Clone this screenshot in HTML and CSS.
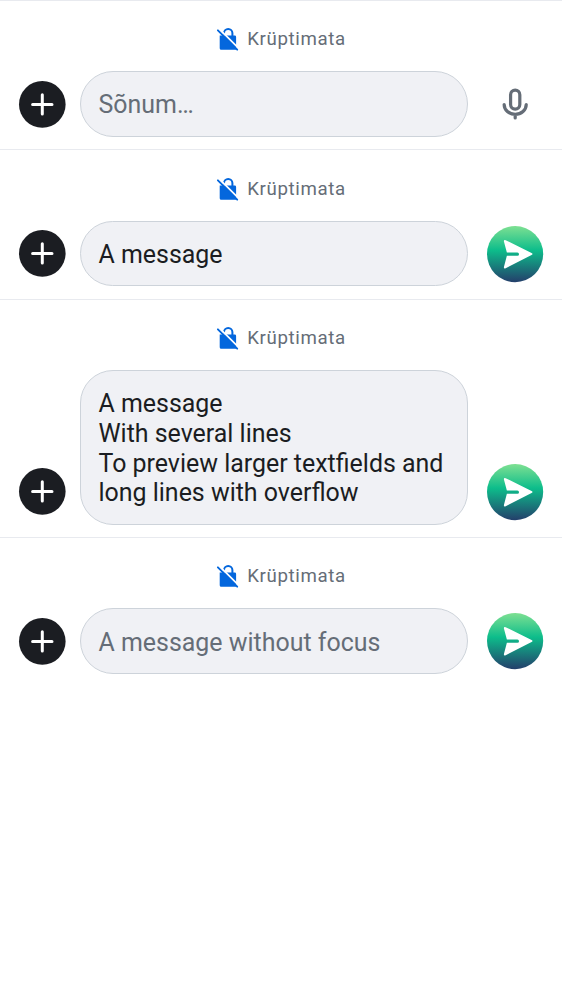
FILE: index.html
```html
<!DOCTYPE html>
<html lang="et">
<head>
<meta charset="utf-8">
<title>Krüptimata</title>
<link rel="stylesheet" href="styles.css">
</head>
<body>
<svg class="defs" aria-hidden="true">
  <defs>
    <linearGradient id="send-fill" x1="0" y1="0" x2="0" y2="1">
      <stop offset="0" stop-color="#7ee092"/>
      <stop offset="0.43" stop-color="#0dbd8b"/>
      <stop offset="1" stop-color="#243f6b"/>
    </linearGradient>
    <symbol id="lock-off" viewBox="0 0 22 24">
      <path d="M8 7.5V6.1a4.2 4.2 0 0 1 8.4 0V10" fill="none" stroke="#0467dd" stroke-width="2"/>
      <path d="M4.2 8.5h14.5a1.4 1.4 0 0 1 1.4 1.4v12.8H5.2a1.5 1.5 0 0 1-1.5-1.5V8.5z" fill="#0467dd"/>
      <path d="M3.4 2.1l20 20" stroke="#fff" stroke-width="1.8"/>
      <path d="M1.9 3.3l19.3 19.4" stroke="#0467dd" stroke-width="1.9" stroke-linecap="round"/>
    </symbol>
    <symbol id="plus" viewBox="0 0 47 47">
      <circle cx="23.3" cy="23.4" r="23.3" fill="#1b1d22"/>
      <path d="M23.3 13.7v19.4M13.6 23.4h19.4" stroke="#fff" stroke-width="3" stroke-linecap="round"/>
    </symbol>
    <symbol id="send" viewBox="0 0 56 56">
      <circle cx="28" cy="28" r="28" fill="url(#send-fill)"/>
      <path d="M16.8 15.2q0-1.9 1.8-1.1L44.4 27q2 1 0 2L18.6 42.1q-1.8.8-1.8-1L19.8 29.7h10.5a1.6 1.6 0 0 0 0-3.2H19.8z" fill="#fff"/>
    </symbol>
    <symbol id="mic" viewBox="0 0 56 56">
      <g fill="none" stroke="#656d77" stroke-width="3.2" stroke-linecap="round">
        <rect x="23.5" y="14" width="9.2" height="19" rx="4.6"/>
        <path d="M17.1 28.4a11 9.8 0 0 0 22 0M28.1 38.4v3.4"/>
      </g>
    </symbol>
  </defs>
</svg>
<main class="previews">
  <section class="composer">
    <div class="status"><svg class="lock"><use href="#lock-off"/></svg><span>Krüptimata</span></div>
    <div class="row">
      <svg class="add"><use href="#plus"/></svg>
      <div class="field muted">Sõnum…</div>
      <svg class="action"><use href="#mic"/></svg>
    </div>
  </section>
  <section class="composer">
    <div class="status"><svg class="lock"><use href="#lock-off"/></svg><span>Krüptimata</span></div>
    <div class="row">
      <svg class="add"><use href="#plus"/></svg>
      <div class="field">A message</div>
      <svg class="action"><use href="#send"/></svg>
    </div>
  </section>
  <section class="composer">
    <div class="status"><svg class="lock"><use href="#lock-off"/></svg><span>Krüptimata</span></div>
    <div class="row">
      <svg class="add"><use href="#plus"/></svg>
      <div class="field">A message<br>With several lines<br>To preview larger textfields and<br>long lines with overflow</div>
      <svg class="action"><use href="#send"/></svg>
    </div>
  </section>
  <section class="composer">
    <div class="status"><svg class="lock"><use href="#lock-off"/></svg><span>Krüptimata</span></div>
    <div class="row">
      <svg class="add"><use href="#plus"/></svg>
      <div class="field muted">A message without focus</div>
      <svg class="action"><use href="#send"/></svg>
    </div>
  </section>
</main>
</body>
</html>
```

FILE: styles.css
```css
* {
  box-sizing: border-box;
}

body {
  margin: 0;
  background: #fff;
  color: #1b1d22;
  font-family: Roboto, "Liberation Sans", sans-serif;
}

.defs {
  display: block;
  width: 0;
  height: 0;
}

symbol {
  overflow: visible;
}

.composer {
  padding: 24.3px 18.7px 12.55px;
  border-top: 1px solid #e8eaef;
}

.status {
  display: flex;
  align-items: center;
  justify-content: center;
  gap: 9px;
  height: 28px;
  margin-bottom: 17.8px;
  color: #656d77;
  font-size: 18.7px;
  letter-spacing: 0.64px;
}

.lock {
  width: 22px;
  height: 24px;
  overflow: visible;
}

.row {
  display: flex;
  align-items: flex-end;
}

.add {
  flex: none;
  width: 47px;
  height: 47px;
  margin: 0 14px 9.3px 0;
  overflow: visible;
}

.field {
  flex: 1;
  padding: 18.4px 17.5px 15.8px 17.8px;
  border: 1px solid #cdd3da;
  border-radius: 33px;
  background: #f0f1f5;
  font-size: 24.94px;
  line-height: 29.6px;
  white-space: nowrap;
}

.muted {
  color: #656d77;
}

.action {
  flex: none;
  width: 56.2px;
  height: 56.2px;
  margin: 0 0 4.6px 18.7px;
  overflow: visible;
}
```
